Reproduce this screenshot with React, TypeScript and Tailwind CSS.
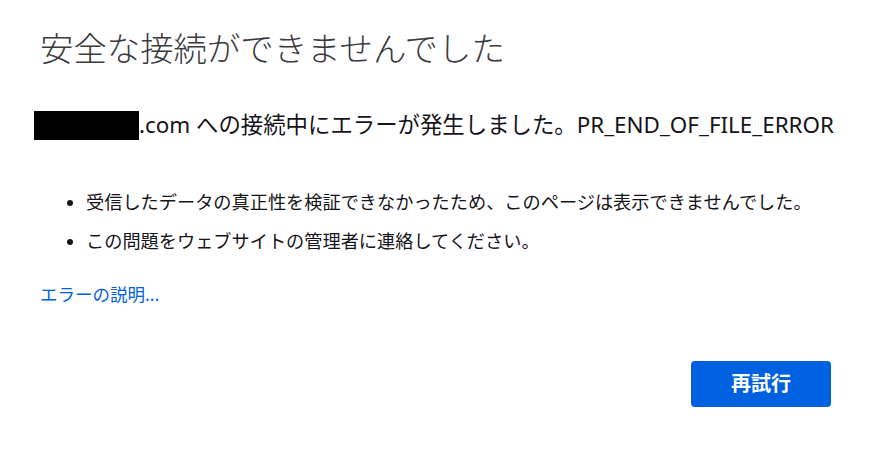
import React from 'react';

const font = { fontFamily: '"Noto Sans", "Noto Sans CJK JP", sans-serif' };

export default function App() {
  return (
    <div className="h-[461px] w-[886px] bg-white text-[#15141a]" style={font}>
      <div className="flex flex-col pl-[40px] pr-[40px] pt-[24px]">
        <h1 className="text-[33.4px] font-light leading-[48px] text-[#3b3b3f]">安全な接続ができませんでした</h1>

        <p className="mt-[38px] flex items-center whitespace-nowrap text-[22.4px] leading-[30px] text-[#15141a]">
          <span className="-ml-[6px] inline-block h-[29px] w-[105px] shrink-0 bg-black" />
          <span>.com への接続中にエラーが発生しました。PR_END_OF_FILE_ERROR</span>
        </p>

        <ul className="mt-[47px] flex flex-col gap-[9px] pl-[46px] text-[18.2px] leading-[30px]">
          <li className="list-disc">受信したデータの真正性を検証できなかったため、このページは表示できませんでした。</li>
          <li className="list-disc">この問題をウェブサイトの管理者に連絡してください。</li>
        </ul>

        <a className="mt-[25px] text-[17.5px] leading-[26px] text-[#0060df]" href="#">エラーの説明...</a>

        <div className="mt-[54px] flex justify-end pr-[15px]">
          <button className="h-[46px] w-[140px] rounded-[4px] bg-[#0061e0] text-[20px] font-bold text-white">再試行</button>
        </div>
      </div>
    </div>
  );
}
